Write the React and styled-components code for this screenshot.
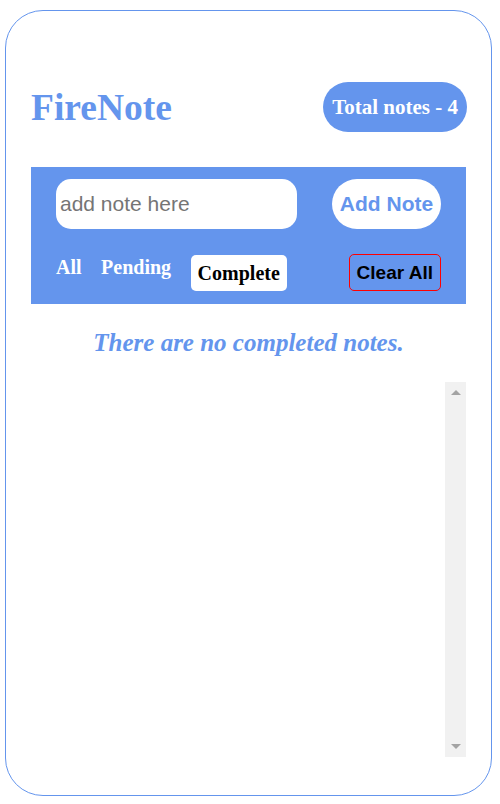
import React, { useState } from 'react';
import styled, { createGlobalStyle } from 'styled-components';

const blue = "#6495ed";
const white = "#ffffff";
const track = "#f1f1f1";
const arrow = "#a3a3a3";

const GlobalStyle = createGlobalStyle`
    body {
        margin: 0;
        font-family: "Liberation Serif", "Times New Roman", serif;
        background: ${white};
    }
`

const Card = styled.div`
    box-sizing: border-box;
    width: 487px;
    height: 786px;
    margin: 10px 0 0 5px;
    padding: 71px 25px 0 25px;
    border: 1px solid ${blue};
    border-radius: 38px;
    display: flex;
    flex-direction: column;
`

const Header = styled.div`
    display: flex;
    align-items: center;
    justify-content: space-between;
    height: 50px;
    margin-bottom: 35px;
`

const Title = styled.h1`
    margin: 0;
    color: ${blue};
    font-size: 37.5px;
    font-weight: bold;
`

const Counter = styled.div`
    box-sizing: border-box;
    height: 50px;
    padding: 0 9px;
    margin-right: -1px;
    border-radius: 25px;
    background: ${blue};
    color: ${white};
    font-size: 21px;
    font-weight: bold;
    display: flex;
    align-items: center;
`

const Panel = styled.div`
    background: ${blue};
    padding: 12px 25px 13px 25px;
    display: flex;
    flex-direction: column;
    gap: 25px;
`

const Row = styled.div`
    display: flex;
    justify-content: space-between;
    align-items: flex-start;
`

const NoteInput = styled.input`
    box-sizing: border-box;
    width: 241px;
    height: 50px;
    border: none;
    border-radius: 15px;
    padding: 0 4px;
    font-family: "Liberation Sans", Arial, sans-serif;
    font-size: 21px;
    outline: none;
    &::placeholder {
        color: #757575;
    }
`

const AddButton = styled.button`
    box-sizing: border-box;
    width: 109px;
    height: 50px;
    border: none;
    border-radius: 25px;
    background: ${white};
    color: ${blue};
    font-family: "Liberation Sans", Arial, sans-serif;
    font-size: 21px;
    font-weight: bold;
    padding: 0;
    cursor: pointer;
`

const Filters = styled.div`
    display: flex;
    align-items: flex-start;
    gap: 19.5px;
    margin-top: 1px;
`

const FilterButton = styled.button`
    border: none;
    border-radius: 5px;
    background: ${p => p.$active ? white : "transparent"};
    color: ${p => p.$active ? "#000000" : white};
    padding: ${p => p.$active ? "6px 7px" : "0"};
    font-family: "Liberation Serif", "Times New Roman", serif;
    font-size: 20px;
    font-weight: bold;
    line-height: 24px;
    cursor: pointer;
`

const ClearButton = styled.button`
    box-sizing: border-box;
    height: 37px;
    padding: 0 7px;
    border: 1px solid red;
    border-radius: 5px;
    background: transparent;
    color: #000000;
    font-family: "Liberation Sans", Arial, sans-serif;
    font-size: 19px;
    font-weight: bold;
    cursor: pointer;
`

const Message = styled.h2`
    margin: 25px 0 25px 0;
    text-align: center;
    color: ${blue};
    font-size: 25px;
    font-style: italic;
    font-weight: bold;
`

const ListArea = styled.div`
    height: 375px;
    display: flex;
`

const NoteList = styled.div`
    flex: 1;
    overflow: hidden;
`

const ScrollTrack = styled.div`
    width: 21px;
    background: ${track};
    display: flex;
    flex-direction: column;
    justify-content: space-between;
`

const ScrollArrow = styled.div`
    height: 21px;
    display: flex;
    align-items: center;
    justify-content: center;

    &::before {
        content: "";
        width: 0;
        height: 0;
        border-left: 5px solid transparent;
        border-right: 5px solid transparent;
        border-${p => p.$down ? "top" : "bottom"}: 5px solid ${arrow};
        margin-top: ${p => p.$down ? "-1px" : "0"};
    }
`

const filters = ["All", "Pending", "Complete"];

export default function App() {
    const [filter, setFilter] = useState("Complete");
    const [text, setText] = useState("");

    return (
        <>
            <GlobalStyle />
            <Card>
                <Header>
                    <Title>FireNote</Title>
                    <Counter>Total notes - 4</Counter>
                </Header>
                <Panel>
                    <Row>
                        <NoteInput
                            placeholder="add note here"
                            value={text}
                            onChange={e => setText(e.target.value)}
                        />
                        <AddButton>Add Note</AddButton>
                    </Row>
                    <Row>
                        <Filters>
                            {filters.map(f => (
                                <FilterButton key={f} $active={f === filter} onClick={() => setFilter(f)}>
                                    {f}
                                </FilterButton>
                            ))}
                        </Filters>
                        <ClearButton>Clear All</ClearButton>
                    </Row>
                </Panel>
                <Message>There are no completed notes.</Message>
                <ListArea>
                    <NoteList />
                    <ScrollTrack>
                        <ScrollArrow />
                        <ScrollArrow $down />
                    </ScrollTrack>
                </ListArea>
            </Card>
        </>
    )
}
